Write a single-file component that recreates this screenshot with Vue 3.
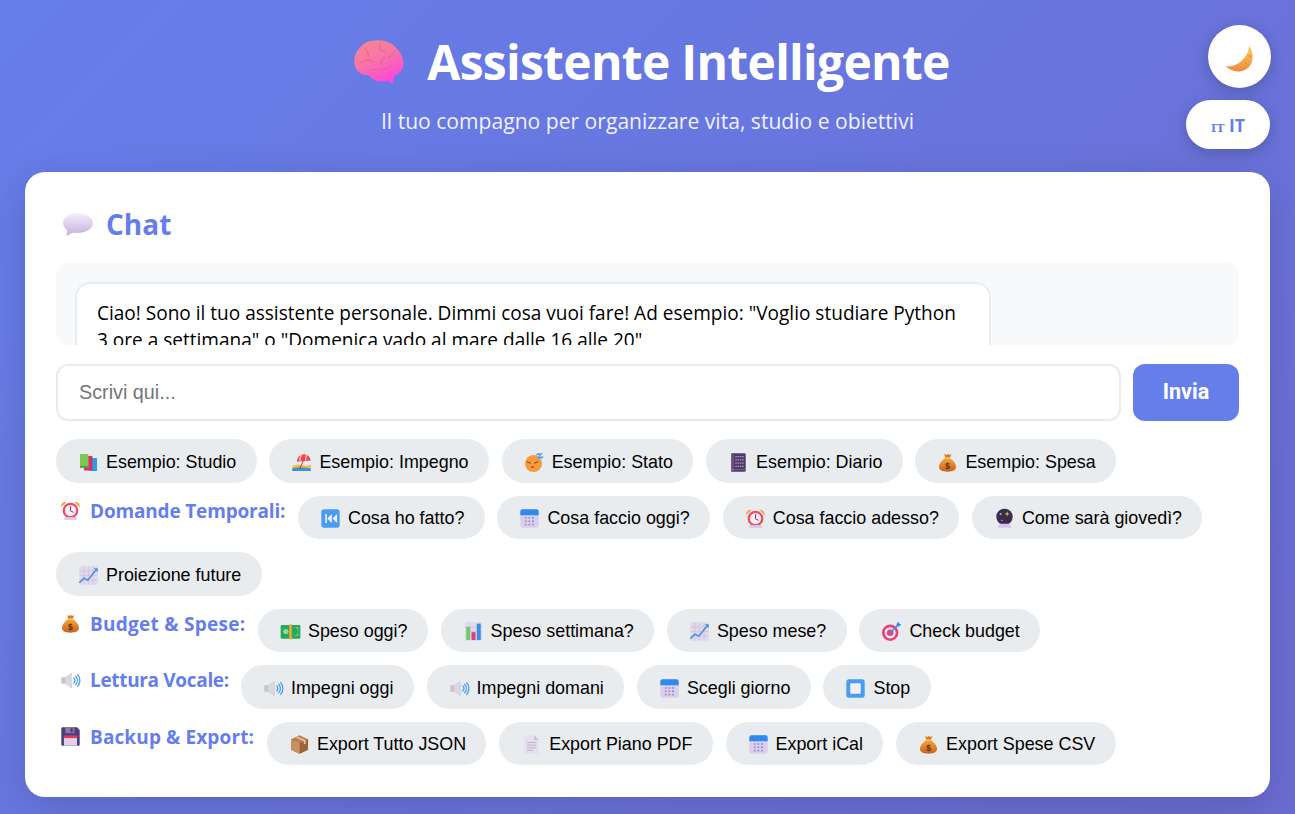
<script setup>
const sections = [
  { chips: [['books','Esempio: Studio'],['beach','Esempio: Impegno'],['sleep','Esempio: Stato'],['notebook','Esempio: Diario'],['bag','Esempio: Spesa']] },
  { icon:'clock', label:'Domande Temporali:', w: 229.2, ls: -0.17, chips: [['rewind','Cosa ho fatto?'],['calendar','Cosa faccio oggi?'],['clock','Cosa faccio adesso?'],['ball','Come sarà giovedì?'],['trend','Proiezione future']] },
  { icon:'bag', label:'Budget & Spese:', w: 189.2, ls: 0.27, chips: [['cash','Speso oggi?'],['bars','Speso settimana?'],['trend','Speso mese?'],['target','Check budget']] },
  { icon:'speaker', label:'Lettura Vocale:', w: 172.2, ls: -0.33, chips: [['speaker','Impegni oggi'],['speaker','Impegni domani'],['calendar','Scegli giorno'],['stop','Stop']] },
  { icon:'floppy', label:'Backup & Export:', w: 198.2, ls: 0.12, chips: [['box','Export Tutto JSON'],['page','Export Piano PDF'],['calendar','Export iCal'],['bag','Export Spese CSV']] },
]
</script>

<template>
  <svg class="sprite" aria-hidden="true">
    <defs>
      <linearGradient id="gb" x1="0" y1="0" x2="0.5" y2="1"><stop offset="0" stop-color="#f58a90"/><stop offset=".55" stop-color="#f873a8"/><stop offset="1" stop-color="#ff48d8"/></linearGradient>
      <linearGradient id="gm" x1="0" y1="0" x2="0" y2="1"><stop offset="0" stop-color="#fbd36b"/><stop offset="1" stop-color="#ee8a3a"/></linearGradient>
      <linearGradient id="gbub" x1="0" y1="0" x2="0" y2="1"><stop offset="0" stop-color="#f5f0fa"/><stop offset="1" stop-color="#c9b6e4"/></linearGradient>
      <linearGradient id="gbag" x1="0" y1="0" x2="0" y2="1"><stop offset="0" stop-color="#f7a83a"/><stop offset="1" stop-color="#c9601f"/></linearGradient>
      <symbol id="brain" viewBox="0 0 32 32">
        <path d="M11 2.500C18 1 25 3 28 8c3 3 4 7 3.500 10-.5 3-2.500 5-5.500 6-.5 2-.7 3.500-1.200 5.500l-2.800-2c-4 1-9 .5-12-3.500-3 0-7-1-8.500-5C0 15 1 10 4 7c2-2.500 4-4 7-4.500z" fill="url(#gb)"/>
        <path d="M7 7c2 1.500 3 3 2.500 5M17 4.500c-1 2 0 4 3 5M26 9c-1 2-2 3-3.500 3.500M5 16c3-2 6-2 8 0M16 20c3 1 6 0 8.500-2.500M20 13c-2 1-3 3-2 5M11 21c1-1 3-1 4 0" fill="none" stroke="#e0608a" stroke-width=".6" stroke-linecap="round"/>
      </symbol>
      <symbol id="moon" viewBox="0 0 32 32">
        <path d="M25 2c5 8 5 16 0 22-6 6-15 6-23.500-.5 5.500.5 12-1.500 16.500-6C22.500 13 25 8 25 2z" fill="url(#gm)"/>
        <circle cx="22" cy="21" r="1.500" fill="#df9a3e"/><circle cx="26" cy="13" r="1.300" fill="#df9a3e"/><circle cx="13" cy="25" r="1.300" fill="#df9a3e"/>
      </symbol>
      <symbol id="bubble" viewBox="0 0 32 32">
        <ellipse cx="17" cy="13" rx="15" ry="10" fill="url(#gbub)"/>
        <path d="M6 19l-.5 7L14 22z" fill="#cdbce6"/>
      </symbol>
      <symbol id="books" viewBox="0 0 32 32">
        <rect x="17" y="9" width="12" height="20" rx="1" fill="#2f9be8"/>
        <rect x="9" y="6" width="13" height="22" rx="1" fill="#d92e6b"/>
        <rect x="3" y="3" width="13" height="21" rx="1" fill="#7bc950"/>
        <rect x="3" y="21" width="13" height="3" fill="#5a9e3a"/>
      </symbol>
      <symbol id="beach" viewBox="0 0 32 32">
        <path d="M2 22c5-3 11-4 16-2 4 1.500 8 1 12-.5V29H2z" fill="#f6b73c"/>
        <path d="M2 25c6-2 18-2 28 0v4H2z" fill="#3d8fe0"/>
        <path d="M9 15C9 7 16 2 23 4c4 1 7 5 7 9z" fill="#ee4550"/>
        <path d="M16 4.500c-2 3-3 6-2.500 10M23 4c.5 3 0 6-1 9" stroke="#f7c9c9" stroke-width="2" fill="none"/>
        <path d="M19 13l-6 13" stroke="#8a5a3a" stroke-width="1.500"/>
      </symbol>
      <symbol id="sleep" viewBox="0 0 32 32">
        <circle cx="14.500" cy="17.500" r="13" fill="#f79a3c"/>
        <path d="M5 15l5 2M16 17l5-2" stroke="#7a3a20" stroke-width="1.500" stroke-linecap="round" fill="none"/>
        <ellipse cx="13" cy="23" rx="2" ry="1.500" fill="#b3412e"/>
        <path d="M20 2h9l-5 5h6l-2 3h-9l5-5h-6z" fill="#45a5f0"/>
      </symbol>
      <symbol id="notebook" viewBox="0 0 32 32">
        <rect x="5" y="2" width="22" height="28" rx="2" fill="#4f3a66"/>
        <rect x="5" y="2" width="4" height="28" fill="#6b5585"/>
        <path d="M11 7h13M11 12h13M11 17h13M11 22h13" stroke="#a88fc0" stroke-width="2" stroke-dasharray="2.500 1"/>
        <path d="M5 27h22" stroke="#8d7aa5" stroke-width="1"/>
      </symbol>
      <symbol id="bag" viewBox="0 0 32 32">
        <path d="M11 3l3 1.500L16.500 3 19 4.500 22 3l-2.500 6h-7z" fill="#d97b26"/>
        <path d="M12.500 9h7C25 13 29 18 29 22.500 29 27.500 24 30 16 30S3 27.500 3 22.500C3 18 7 13 12.500 9z" fill="url(#gbag)"/>
        <rect x="12" y="8" width="8" height="2.500" rx="1" fill="#f7c04a"/>
        <text x="16" y="26" text-anchor="middle" font-size="13" font-weight="700" font-family="Liberation Sans, sans-serif" fill="#5b2e12">$</text>
      </symbol>
      <symbol id="clock" viewBox="0 0 32 32">
        <path d="M2 11C1 6 5 2 10 3zM30 11c1-5-3-9-8-8z" fill="#f2a93b"/>
        <circle cx="16" cy="16" r="12" fill="#ee4d68"/>
        <circle cx="16" cy="16" r="8.500" fill="#f6edf5"/>
        <path d="M16 10v6.500l4 2" stroke="#7a3a50" stroke-width="1.500" fill="none" stroke-linecap="round"/>
        <path d="M8 26l-2 4h20l-2-4z" fill="#d9c3e3"/>
      </symbol>
      <symbol id="rewind" viewBox="0 0 32 32">
        <rect x="2" y="2" width="28" height="28" rx="4" fill="#4a9cf0"/>
        <path d="M8 9h2.500v14H8zM18 9v14l-7-7zM26 9v14l-7-7z" fill="#f1ecfa"/>
      </symbol>
      <symbol id="calendar" viewBox="0 0 32 32">
        <rect x="2" y="2" width="28" height="28" rx="3.500" fill="#dccdee"/>
        <path d="M2 11V5.500A3.500 3.500 0 0 1 5.500 2h21A3.500 3.500 0 0 1 30 5.500V11z" fill="#2f8af0"/>
        <path d="M9 14h2.500v2.500H9zM14.500 14H17v2.500h-2.500zM9 19h2.500v2.500H9zM14.500 19H17v2.500h-2.500zM9 24h2.500v2.500H9zM14.500 24H17v2.500h-2.500zM20 24h2.500v2.500H20z" fill="#9a90b8"/>
        <path d="M20 14h2.500v2.500H20zM20 19h2.500v2.500H20z" fill="#3f94ef"/>
      </symbol>
      <symbol id="ball" viewBox="0 0 32 32">
        <circle cx="16" cy="13.500" r="12.500" fill="#3a2d4a"/>
        <path d="M20 5l1 3 3 1-3 1-1 3-1-3-3-1 3-1z" fill="#e8b860"/>
        <circle cx="10" cy="9" r="1.500" fill="#c9a8e8"/>
        <circle cx="12" cy="19" r="1.200" fill="#8fb5f0"/>
        <path d="M8 24h16l2 6H6z" fill="#d9c3ee"/>
      </symbol>
      <symbol id="trend" viewBox="0 0 32 32">
        <rect x="2" y="2" width="28" height="28" rx="2" fill="#e2d8ec"/>
        <path d="M2 9h28M2 16h28M2 23h28M9 2v28M16 2v28M23 2v28" stroke="#cbbfda" stroke-width="1"/>
        <path d="M2 27l7-7 6 3L27 8" stroke="#3a8fe0" stroke-width="2.200" fill="none"/>
        <path d="M24 5h6v6z" fill="#3a8fe0"/>
      </symbol>
      <symbol id="cash" viewBox="0 0 32 32">
        <rect x="1" y="6" width="30" height="21" rx="2" fill="#27a85a"/>
        <circle cx="9" cy="16" r="4" fill="#8fdc9e"/>
        <path d="M20 9h8v14h-8a7 7 0 0 0 0-14z" fill="#5fc97f"/>
        <rect x="14" y="5" width="4" height="23" fill="#f5a631"/>
      </symbol>
      <symbol id="bars" viewBox="0 0 32 32">
        <rect x="3" y="2" width="26" height="28" rx="2" fill="#e2d8ec"/>
        <path d="M3 9h26M3 16h26M3 23h26" stroke="#c8bcd6" stroke-width="1"/>
        <rect x="5" y="9" width="6" height="20" fill="#6fcc64"/>
        <rect x="13" y="17" width="6" height="12" fill="#e8367f"/>
        <rect x="21" y="4" width="6" height="25" fill="#3a8fe0"/>
      </symbol>
      <symbol id="target" viewBox="0 0 32 32">
        <circle cx="14" cy="18" r="12.500" fill="#e84275"/>
        <circle cx="14" cy="18" r="8.500" fill="#f1e8f2"/>
        <circle cx="14" cy="18" r="5" fill="#e84275"/>
        <path d="M14 18L27 5" stroke="#3a8fe0" stroke-width="2.500"/>
        <path d="M23 5l4-4 1 3 3 1-4 4z" fill="#3a8fe0"/>
      </symbol>
      <symbol id="speaker" viewBox="0 0 32 32">
        <path d="M2 11h6l10-7v24l-10-7H2z" fill="#c5c5cc"/>
        <path d="M8 11l10-7v24l-10-7z" fill="#d8d8dd"/>
        <path d="M21 12a6 6 0 0 1 0 8M24 9.500a10 10 0 0 1 0 13M27 7a14 14 0 0 1 0 18" stroke="#45a0ef" stroke-width="2" fill="none" stroke-linecap="round"/>
      </symbol>
      <symbol id="stop" viewBox="0 0 32 32">
        <rect x="2" y="2" width="28" height="28" rx="4" fill="#4a9cf0"/>
        <rect x="8" y="8" width="16" height="16" rx="1.500" fill="#f3eefb"/>
      </symbol>
      <symbol id="floppy" viewBox="0 0 32 32">
        <path d="M2 4a2 2 0 0 1 2-2h22l4 4v22a2 2 0 0 1-2 2H4a2 2 0 0 1-2-2z" fill="#4f3a7a"/>
        <rect x="8" y="2" width="14" height="9" fill="#8a7aa8"/>
        <rect x="16" y="3.500" width="3.500" height="6" fill="#4f3a7a"/>
        <rect x="6" y="15" width="20" height="15" fill="#ded2ea"/>
        <rect x="6" y="15" width="20" height="3.500" fill="#e9365e"/>
      </symbol>
      <symbol id="box" viewBox="0 0 32 32">
        <path d="M16 2l13 6v16l-13 6-13-6V8z" fill="#b9804d"/>
        <path d="M16 14l13-6v16l-13 6z" fill="#9a6438"/>
        <path d="M3 8l13 6v16L3 24z" fill="#c59062"/>
        <path d="M9.500 5l13 6v5l3-1.500v-5l-13-6z" fill="#e3c098"/>
      </symbol>
      <symbol id="page" viewBox="0 0 32 32">
        <path d="M5 2h15l7 7v21H5z" fill="#e7dff0"/>
        <path d="M20 2v7h7z" fill="#cbbdd9"/>
        <path d="M9 13h14M9 17h14M9 21h14M9 25h9" stroke="#b5aabf" stroke-width="1.300"/>
      </symbol>
    </defs>
  </svg>

  <div class="page">
    <div class="floating">
      <button class="round"><svg class="i-moon"><use href="#moon"/></svg></button>
      <button class="lang"><span class="flag">IT</span> IT</button>
    </div>

    <header class="hero">
      <h1><svg class="i-brain"><use href="#brain"/></svg>Assistente Intelligente</h1>
      <p>Il tuo compagno per organizzare vita, studio e obiettivi</p>
    </header>

    <main class="card">
      <h2><svg class="i-bubble"><use href="#bubble"/></svg>Chat</h2>
      <div class="log">
        <div class="msg">Ciao! Sono il tuo assistente personale. Dimmi cosa vuoi fare! Ad esempio: "Voglio studiare Python 3 ore a settimana" o "Domenica vado al mare dalle 16 alle 20"</div>
      </div>
      <div class="send">
        <input type="text" placeholder="Scrivi qui..." />
        <button class="go">Invia</button>
      </div>
      <div class="groups">
        <div v-for="(s, n) in sections" :key="n" class="row">
          <span v-if="s.label" class="label" :style="{ width: s.w + 'px', letterSpacing: s.ls + 'px' }"><svg class="i-label"><use :href="'#' + s.icon"/></svg>{{ s.label }}</span>
          <button v-for="c in s.chips" :key="c[1]" class="chip"><svg class="i-chip"><use :href="'#' + c[0]"/></svg>{{ c[1] }}</button>
        </div>
      </div>
    </main>
  </div>
</template>

<style>
html, body { margin: 0; height: 814px; overflow: hidden; }
body { background: linear-gradient(135deg, #667eea 0%, #764ba2 100%) no-repeat; background-size: 1295px 4700px; }
</style>

<style scoped>
.sprite { position: absolute; width: 0; height: 0; }
.page {
  height: 814px;
  box-sizing: border-box;
  padding: 26px 25px 0;
  position: relative;
  font-family: "Open Sans", "Noto Sans", sans-serif;
}
.floating {
  position: absolute;
  top: 25px;
  right: 24px;
  display: flex;
  flex-direction: column;
  align-items: flex-end;
  gap: 12px;
}
.round {
  width: 63px;
  height: 63px;
  border: 0;
  border-radius: 50%;
  background: #fff;
  box-shadow: 0 4px 15px rgba(0,0,0,.2);
  padding: 4px 0 0;
  display: flex;
  align-items: center;
  justify-content: center;
}
.i-moon { width: 32px; height: 32px; }
.lang {
  width: 84px;
  height: 49px;
  margin-right: 1px;
  border: 0;
  border-radius: 25px;
  background: #fff;
  box-shadow: 0 4px 15px rgba(0,0,0,.2);
  color: #667eea;
  font: 700 17.6px "Open Sans", sans-serif;
  padding: 0;
}
.flag { font: 700 11px "DejaVu Serif", serif; }
.hero { text-align: center; color: #fff; height: 146px; }
.hero h1 {
  margin: 0;
  font-size: 48px;
  line-height: 72px;
  font-weight: 700;
  letter-spacing: -.7px;
  display: flex;
  justify-content: center;
  align-items: center;
  gap: 23px;
  padding-left: 8px;
}
.i-brain { width: 51px; height: 51px; }
.hero p {
  margin: 7px 0 0;
  font-size: 21.1px;
  line-height: 32px;
  opacity: .9;
}
.card {
  height: 625px;
  box-sizing: border-box;
  background: #fff;
  border-radius: 20px;
  padding: 31px;
  box-shadow: 0 10px 40px rgba(0,0,0,.15);
}
h2 {
  margin: 0;
  height: 60px;
  color: #667eea;
  font-size: 28px;
  font-weight: 700;
  line-height: 42px;
  display: flex;
  gap: 13px;
  padding-left: 5px;
  align-items: flex-start;
}
.i-bubble { width: 32px; height: 32px; margin-top: 7px; }
.log {
  height: 82px;
  background: #f8f9fa;
  border-radius: 12px;
  overflow: hidden;
  padding: 19px 0 0 19px;
  box-sizing: border-box;
}
.msg {
  width: 916px;
  box-sizing: border-box;
  border: 2px solid #e9ecef;
  border-radius: 15px;
  background: #fff;
  padding: 16px 20px;
  font-size: 19.05px;
  line-height: 27px;
  color: #000;
}
.send { display: flex; gap: 12px; margin-top: 19px; }
input {
  flex: 1;
  height: 57px;
  box-sizing: border-box;
  border: 2px solid #e9ecef;
  border-radius: 12px;
  padding: 0 21px;
  font: 19.8px "Liberation Sans", sans-serif;
  outline: none;
}
input::placeholder { color: #757575; }
.go {
  width: 106px;
  height: 57px;
  border: 0;
  border-radius: 12px;
  background: #667eea;
  color: #fff;
  font: 700 21.5px Roboto, sans-serif;
  padding: 0 0 2px;
}
.groups { margin-top: 18.4px; display: flex; flex-direction: column; gap: 12.9px; }
.row { display: flex; flex-wrap: wrap; gap: 12.9px 12.8px; align-items: flex-start; }
.label {
  color: #667eea;
  font-size: 19px;
  font-weight: 700;
  line-height: 30px;
  display: flex;
  align-items: center;
  gap: 9px;
  padding-left: 4px;
  box-sizing: border-box;
  white-space: nowrap;
}
.i-label { width: 21px; height: 21px; flex: none; }
.chip {
  height: 43.6px;
  border: 0;
  border-radius: 22px;
  background: #e9ecef;
  color: #000;
  padding: 2px 20.3px 0 22px;
  font: 17.9px "Liberation Sans", sans-serif;
  display: flex;
  align-items: center;
  gap: 7px;
}
.i-chip { width: 21px; height: 21px; flex: none; }
</style>
